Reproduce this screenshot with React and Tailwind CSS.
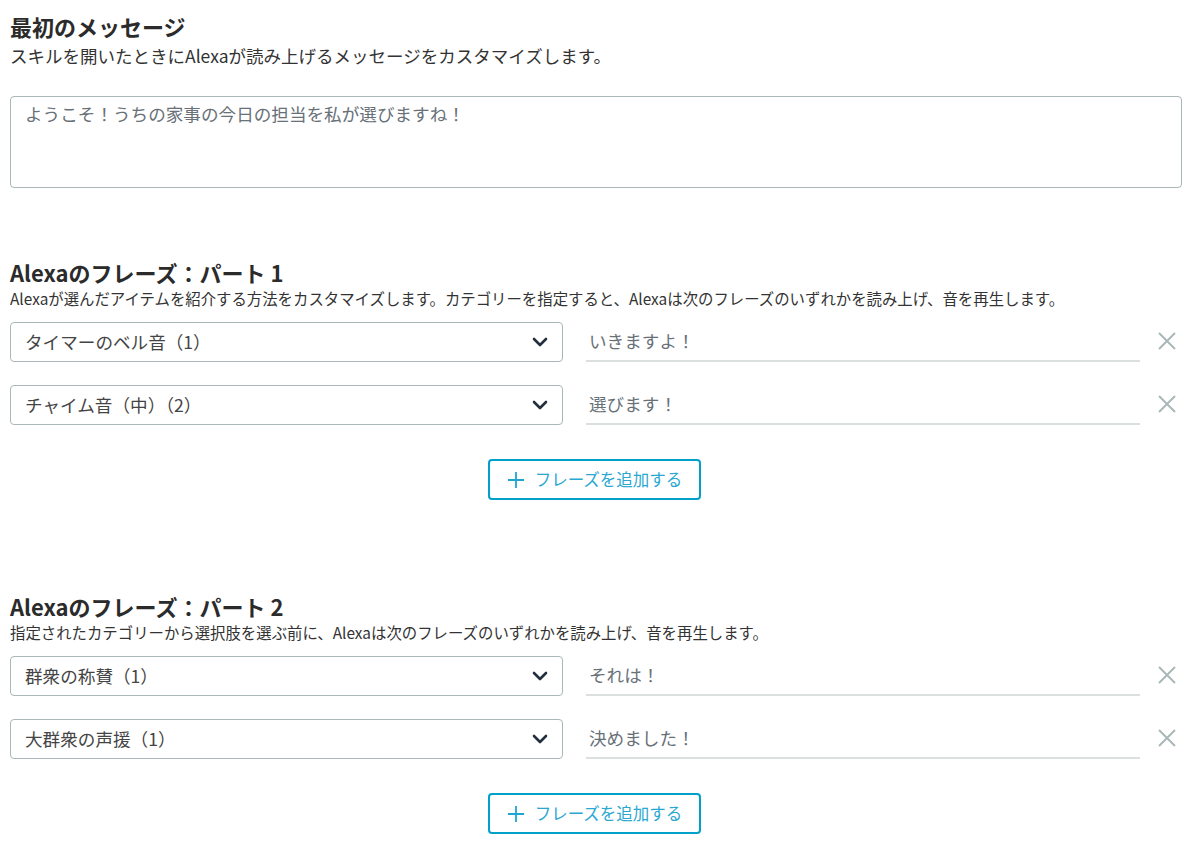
import React from 'react'

const FONT = { fontFamily: '"Noto Sans CJK JP", "Noto Sans", sans-serif' }

const PARTS = [
  {
    title: 'Alexaのフレーズ：パート 1',
    desc: 'Alexaが選んだアイテムを紹介する方法をカスタマイズします。カテゴリーを指定すると、Alexaは次のフレーズのいずれかを読み上げ、音を再生します。',
    rows: [
      { sound: 'タイマーのベル音（1）', phrase: 'いきますよ！' },
      { sound: 'チャイム音（中）（2）', phrase: '選びます！' },
    ],
  },
  {
    title: 'Alexaのフレーズ：パート 2',
    desc: '指定されたカテゴリーから選択肢を選ぶ前に、Alexaは次のフレーズのいずれかを読み上げ、音を再生します。',
    rows: [
      { sound: '群衆の称賛（1）', phrase: 'それは！' },
      { sound: '大群衆の声援（1）', phrase: '決めました！' },
    ],
  },
]

function Chevron() {
  return (
    <svg width="18" height="18" viewBox="0 0 18 18" fill="none" stroke="#232f3e" strokeWidth="2.6" strokeLinecap="round" strokeLinejoin="round">
      <path d="M3 6l6 6 6-6" />
    </svg>
  )
}

function Cross() {
  return (
    <svg width="20" height="20" viewBox="0 0 20 20" fill="none" stroke="#aab7b8" strokeWidth="2">
      <path d="M2 2l16 16M18 2L2 18" />
    </svg>
  )
}

function PhraseRow({ sound, phrase }) {
  return (
    <div className="flex items-center h-[40px]">
      <div className="w-[553px] h-[40px] flex items-center justify-between pl-[14px] pr-[13px] border border-[#aab7b8] rounded-[4px] bg-white">
        <span className="text-[17.6px] text-[#444]">{sound}</span>
        <Chevron />
      </div>
      <div className="ml-[23px] flex-1 h-[40px] flex items-center pl-[3px] border-b-2 border-[#dadfe0]">
        <span className="text-[17.6px] text-[#687078]">{phrase}</span>
      </div>
      <div className="w-[42px] flex justify-end pr-[5px] pb-[2px]">
        <Cross />
      </div>
    </div>
  )
}

function AddButton() {
  return (
    <div className="flex justify-center pr-[3px]">
      <button className="w-[213px] h-[41px] flex items-center justify-center gap-[10px] border-2 border-[#00a1c9] rounded-[4px] bg-white">
        <svg width="18" height="18" viewBox="0 0 18 18" fill="none" stroke="#1fa6d0" strokeWidth="1.8">
          <path d="M9 1v16M1 9h16" />
        </svg>
        <span className="text-[16.5px] text-[#2aa8d2]">フレーズを追加する</span>
      </button>
    </div>
  )
}

export default function App() {
  return (
    <div className="bg-white min-h-screen px-[10px] pr-[18px] pt-[12px]" style={FONT}>
      <h2 className="text-[22px] leading-[28px] font-bold text-[#2b2b2b]">最初のメッセージ</h2>
      <p className="mt-[4px] text-[17.5px] leading-[24px] text-[#333]">
        スキルを開いたときにAlexaが読み上げるメッセージをカスタマイズします。
      </p>
      <div className="mt-[28px] h-[92px] border border-[#aab7b8] rounded-[4px] px-[14px] pt-[4px]">
        <span className="text-[17.6px] text-[#687078]">ようこそ！うちの家事の今日の担当を私が選びますね！</span>
      </div>

      {PARTS.map((part, i) => (
        <section key={part.title} className={i === 0 ? 'mt-[70px]' : 'mt-[92px]'}>
          <h2 className="text-[22px] leading-[28px] font-bold text-[#2b2b2b]">{part.title}</h2>
          <p className="mt-[2px] text-[15.4px] leading-[20px] text-[#333]">{part.desc}</p>
          <div className="mt-[14px] flex flex-col gap-[23px]">
            {part.rows.map(r => (
              <PhraseRow key={r.sound} {...r} />
            ))}
          </div>
          <div className="mt-[34px]">
            <AddButton />
          </div>
        </section>
      ))}
    </div>
  )
}
